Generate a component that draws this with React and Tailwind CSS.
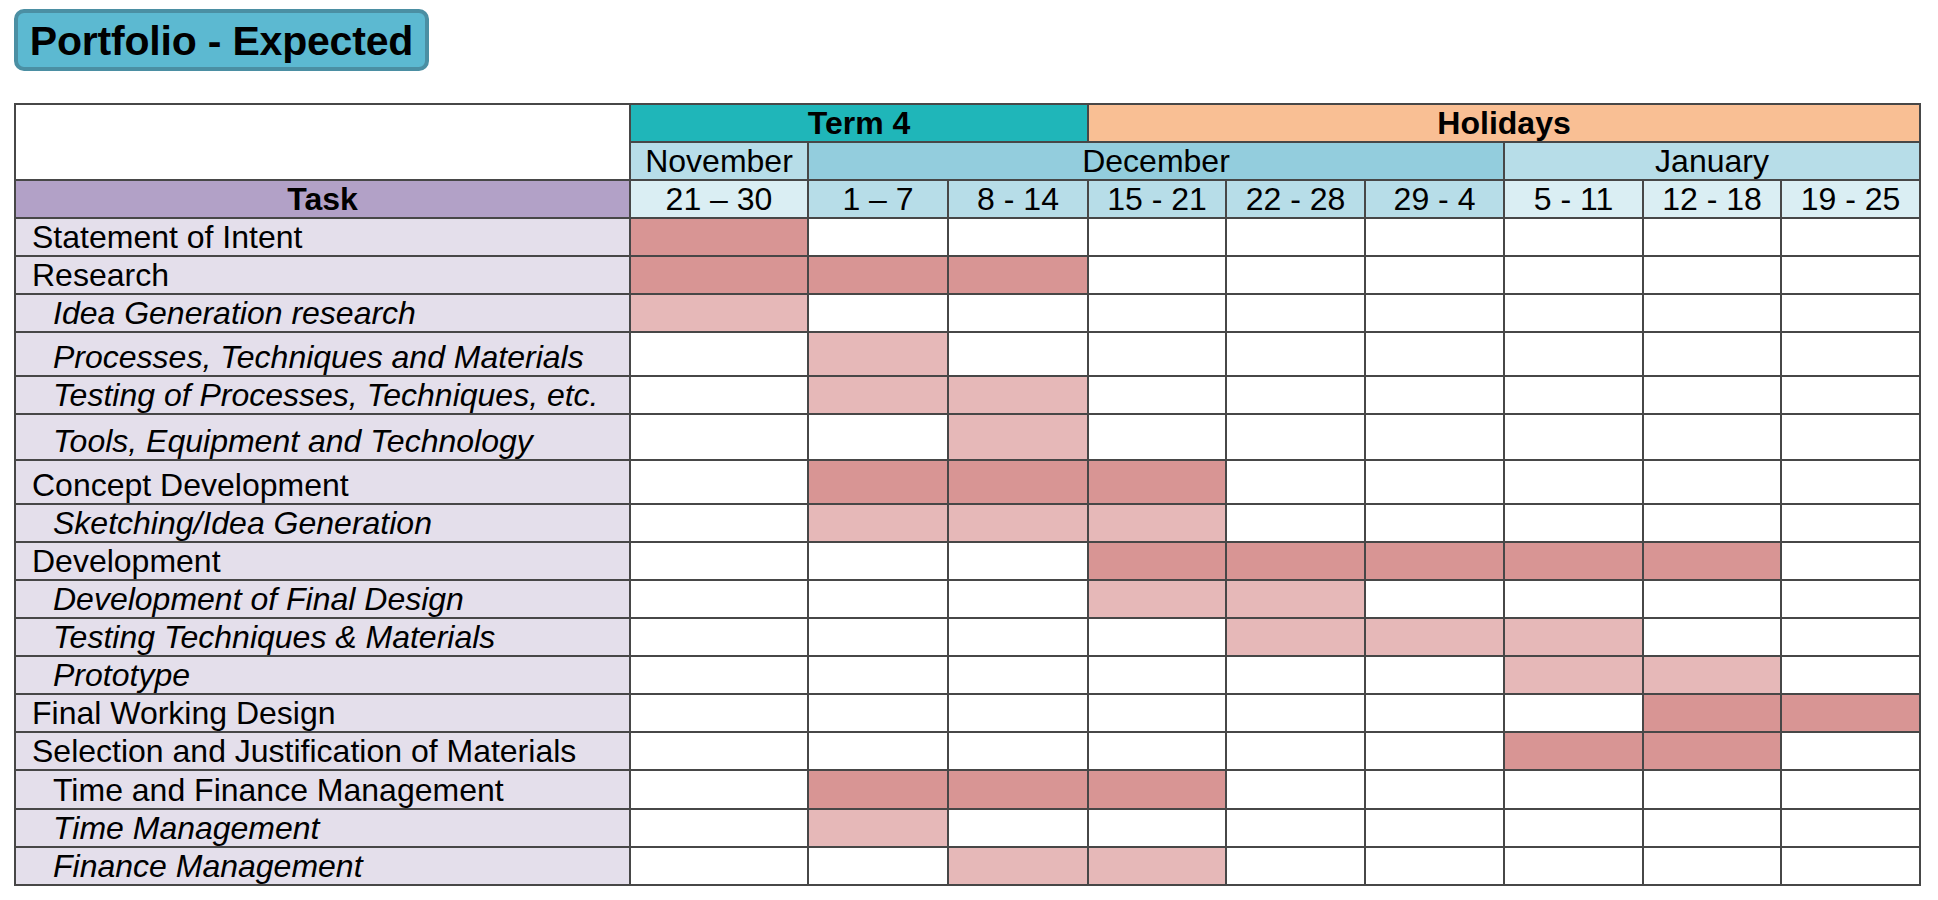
const weeks = [
  { label: "21 – 30", bg: "bg-[#daeef3]" },
  { label: "1 – 7", bg: "bg-[#b7dde8]" },
  { label: "8 - 14", bg: "bg-[#b7dde8]" },
  { label: "15 - 21", bg: "bg-[#b7dde8]" },
  { label: "22 - 28", bg: "bg-[#b7dde8]" },
  { label: "29 - 4", bg: "bg-[#b7dde8]" },
  { label: "5 - 11", bg: "bg-[#daeef3]" },
  { label: "12 - 18", bg: "bg-[#daeef3]" },
  { label: "19 - 25", bg: "bg-[#daeef3]" },
];

// D = main task bar, L = sub task bar
const tasks = [
  { name: "Statement of Intent", kind: "D", on: [0], h: "h-[38px]" },
  { name: "Research", kind: "D", on: [0, 1, 2], h: "h-[38px]" },
  { name: "Idea Generation research", sub: true, italic: true, kind: "L", on: [0], h: "h-[38px]" },
  { name: "Processes, Techniques and Materials", sub: true, italic: true, kind: "L", on: [1], h: "h-[44px]" },
  { name: "Testing of Processes, Techniques, etc.", sub: true, italic: true, kind: "L", on: [1, 2], h: "h-[38px]" },
  { name: "Tools, Equipment and Technology", sub: true, italic: true, kind: "L", on: [2], h: "h-[46px]" },
  { name: "Concept Development", kind: "D", on: [1, 2, 3], h: "h-[44px]" },
  { name: "Sketching/Idea Generation", sub: true, italic: true, kind: "L", on: [1, 2, 3], h: "h-[38px]" },
  { name: "Development", kind: "D", on: [3, 4, 5, 6, 7], h: "h-[38px]" },
  { name: "Development of Final Design", sub: true, italic: true, kind: "L", on: [3, 4], h: "h-[38px]" },
  { name: "Testing Techniques & Materials", sub: true, italic: true, kind: "L", on: [4, 5, 6], h: "h-[38px]" },
  { name: "Prototype", sub: true, italic: true, kind: "L", on: [6, 7], h: "h-[38px]" },
  { name: "Final Working Design", kind: "D", on: [7, 8], h: "h-[38px]" },
  { name: "Selection and Justification of Materials", kind: "D", on: [6, 7], h: "h-[38px]" },
  { name: "Time and Finance Management", sub: true, kind: "D", on: [1, 2, 3], h: "h-[39px]" },
  { name: "Time Management", sub: true, italic: true, kind: "L", on: [1], h: "h-[38px]" },
  { name: "Finance Management", sub: true, italic: true, kind: "L", on: [2, 3], h: "h-[37px]" },
];

const fill = { D: "bg-[#d89594]", L: "bg-[#e6b8b8]" };

const cell = "border-2 border-[#474747] p-0 align-bottom leading-[36px]";

export default function App() {
  return (
    <div className="min-h-screen bg-white pt-[9px] pl-[14px] font-['Liberation_Sans',Arial,sans-serif] text-black">
      <div className="w-[415px] h-[62px] rounded-[10px] border-4 border-[#4b8fa3] bg-[#5cb9d1] flex items-center justify-center">
        <span className="text-[41px] font-bold leading-none tracking-[-0.2px] pt-[2px]">Portfolio - Expected</span>
      </div>

      <table className="mt-[32px] table-fixed border-collapse w-[1906px] text-[32px]">
        <colgroup>
          <col className="w-[615px]" />
          <col className="w-[178px]" />
          <col className="w-[140px]" />
          <col className="w-[140px]" />
          <col className="w-[138px]" />
          <col className="w-[139px]" />
          <col className="w-[139px]" />
          <col className="w-[139px]" />
          <col className="w-[138px]" />
          <col className="w-[139px]" />
        </colgroup>
        <thead>
          <tr className="h-[38px]">
            <th rowSpan={2} className={`${cell} bg-white`} />
            <th colSpan={3} className={`${cell} bg-[#1fb6b9] font-bold text-center`}>Term 4</th>
            <th colSpan={6} className={`${cell} bg-[#f9bf94] font-bold text-center`}>Holidays</th>
          </tr>
          <tr className="h-[38px]">
            <th className={`${cell} bg-[#b7dde8] font-normal text-center`}>November</th>
            <th colSpan={5} className={`${cell} bg-[#93cddd] font-normal text-center`}>December</th>
            <th colSpan={3} className={`${cell} bg-[#b7dde8] font-normal text-center`}>January</th>
          </tr>
          <tr className="h-[38px]">
            <th className={`${cell} bg-[#b2a1c7] font-bold text-center`}>Task</th>
            {weeks.map((w) => (
              <th key={w.label} className={`${cell} ${w.bg} font-normal text-center`}>
                {w.label}
              </th>
            ))}
          </tr>
        </thead>
        <tbody>
          {tasks.map((t) => (
            <tr key={t.name} className={t.h}>
              <td
                className={`${cell} bg-[#e4dfeb] whitespace-nowrap ${t.sub ? "pl-[37px]" : "pl-[16px]"} ${
                  t.italic ? "italic" : ""
                }`}
              >
                {t.name}
              </td>
              {weeks.map((w, i) => (
                <td key={w.label} className={`${cell} ${t.on.includes(i) ? fill[t.kind] : "bg-white"}`} />
              ))}
            </tr>
          ))}
        </tbody>
      </table>
    </div>
  );
}
